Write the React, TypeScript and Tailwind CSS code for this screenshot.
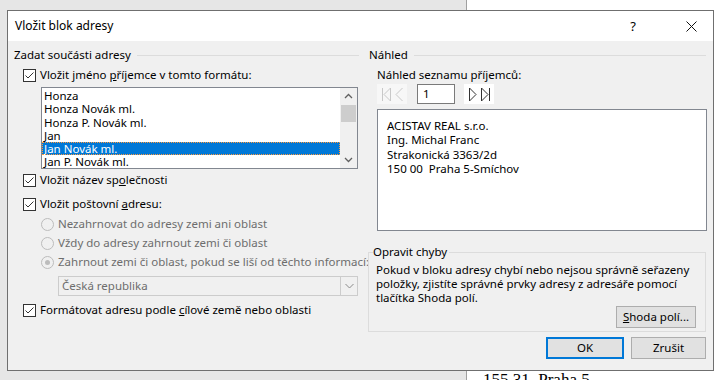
import type { ReactNode } from "react";

const ui = "font-['Noto_Sans',sans-serif] text-[11.5px] leading-[14px]";

function CheckBox({ children }: { children: ReactNode }) {
    return (
        <div className="flex items-center h-[14px]">
            <span className="w-[13px] h-[13px] border border-[#333333] bg-white flex items-center justify-center shrink-0">
                <svg width="11" height="11" viewBox="0 0 11 11">
                    <polyline points="1.5,5.5 4,8 9.5,2.5" fill="none" stroke="#333333" strokeWidth="1" />
                </svg>
            </span>
            <span className="ml-[4px] text-black whitespace-nowrap">{children}</span>
        </div>
    );
}

function Radio({ children, on }: { children: ReactNode; on?: boolean }) {
    return (
        <div className="flex items-center h-[14px]">
            <span className="w-[13px] h-[13px] rounded-full border border-[#bcbcbc] bg-[#f0f0f0] flex items-center justify-center shrink-0">
                {on && <span className="w-[5px] h-[5px] rounded-full bg-[#bcbcbc]" />}
            </span>
            <span className="ml-[4px] text-[#6d6d6d] whitespace-nowrap">{children}</span>
        </div>
    );
}

function GroupLabel({ children }: { children: ReactNode }) {
    return (
        <div className="flex items-center h-[14px]">
            <span className="whitespace-nowrap text-black">{children}</span>
            <span className="flex-1 ml-[6px] h-px bg-[#dcdcdc]" />
        </div>
    );
}

const names = ["Honza", "Honza Novák ml.", "Honza P. Novák ml.", "Jan", "Jan Novák ml.", "Jan P. Novák ml."];

export default function App() {
    return (
        <div className={`relative w-[724px] h-[380px] overflow-hidden flex ${ui}`}>
            {/* document behind */}
            <div className="w-[467px] bg-[#e6e6e6] border-r border-[#a0a0a0]" />
            <div className="flex-1 bg-white flex flex-col justify-end">
                <div className="ml-[16px] mb-[-10px] font-['Liberation_Serif',serif] text-[17px] leading-[20px] text-black whitespace-nowrap">
                    155 31&nbsp; Praha 5
                </div>
            </div>

            {/* dialog */}
            <div className="absolute left-[7px] top-[10px] w-[707px] h-[361px] border border-[#6f6f6f] bg-[#f0f0f0] flex flex-col">
                <div className="h-[30px] bg-white flex items-center pl-[7px] shrink-0">
                    <span className="flex-1 text-black text-[12px]">Vložit blok adresy</span>
                    <span className="w-[14px] text-center text-[13px] text-black mr-[46px]">?</span>
                    <svg width="11" height="11" viewBox="0 0 11 11" className="mr-[16px]">
                        <path d="M0.5 0.5 L10.5 10.5 M10.5 0.5 L0.5 10.5" stroke="#111111" strokeWidth="1" />
                    </svg>
                </div>

                <div className="flex pl-[6px] pt-[7px]">
                    {/* left column */}
                    <div className="w-[345px] flex flex-col">
                        <GroupLabel>Zadat součásti adresy</GroupLabel>
                        <div className="mt-[6px] ml-[9px]">
                            <CheckBox>
                                Vložit jméno <u>p</u>říjemce v tomto formátu:
                            </CheckBox>
                        </div>
                        <div className="mt-[5px] ml-[27px] w-[317px] h-[82px] border border-[#828790] bg-white flex">
                            <div className="flex-1 flex flex-col pt-px">
                                {names.map((n) => (
                                    <div
                                        key={n}
                                        className={`leading-[13.3px] pl-[2px] whitespace-nowrap ${
                                            n === "Jan Novák ml."
                                                ? "bg-[#0078d7] text-white outline-1 outline-dotted outline-[#ff9a3c] -outline-offset-1"
                                                : "text-black"
                                        }`}
                                    >
                                        {n}
                                    </div>
                                ))}
                            </div>
                            <div className="w-[17px] bg-[#f0f0f0] flex flex-col items-center">
                                <svg width="17" height="17" viewBox="0 0 17 17">
                                    <polyline points="5,10 8.5,6.5 12,10" fill="none" stroke="#606060" strokeWidth="1.3" />
                                </svg>
                                <div className="w-[15px] h-[17px] bg-[#cdcdcd]" />
                                <div className="flex-1" />
                                <svg width="17" height="17" viewBox="0 0 17 17">
                                    <polyline points="5,7 8.5,10.5 12,7" fill="none" stroke="#606060" strokeWidth="1.3" />
                                </svg>
                            </div>
                        </div>
                        <div className="mt-[4px] ml-[9px]">
                            <CheckBox>
                                Vložit název sp<u>o</u>lečnosti
                            </CheckBox>
                        </div>
                        <div className="mt-[10px] ml-[9px]">
                            <CheckBox>
                                Vložit poštovní <u>a</u>dresu:
                            </CheckBox>
                        </div>
                        <div className="mt-[6px] ml-[27px] flex flex-col gap-[5px]">
                            <Radio>Nezahrnovat do adresy zemi ani oblast</Radio>
                            <Radio>Vždy do adresy zahrnout zemi či oblast</Radio>
                            <Radio on>Zahrnout zemi či oblast, pokud se liší od těchto informací:</Radio>
                        </div>
                        <div className="mt-[7px] ml-[44px] w-[300px] h-[20px] border border-[#cccccc] bg-[#f0f0f0] flex">
                            <span className="flex-1 pl-[3px] leading-[18px] text-[#6d6d6d]">Česká republika</span>
                            <span className="w-[17px] border-l border-[#cccccc] flex items-center justify-center">
                                <svg width="9" height="6" viewBox="0 0 9 6">
                                    <polyline points="0.5,1 4.5,5 8.5,1" fill="none" stroke="#8a8a8a" strokeWidth="1" />
                                </svg>
                            </span>
                        </div>
                        <div className="mt-[7px] ml-[9px]">
                            <CheckBox>
                                Formátovat adresu podle <u>c</u>ílové země nebo oblasti
                            </CheckBox>
                        </div>
                    </div>

                    {/* right column */}
                    <div className="ml-[9px] w-[338px] flex flex-col">
                        <div className="pl-px">
                            <GroupLabel>Náhled</GroupLabel>
                        </div>
                        <div className="mt-[6px] pl-[9px] h-[14px] text-black whitespace-nowrap">Náhled seznamu příjemců:</div>
                        <div className="mt-[2px] pl-[9px] flex items-center h-[20px]">
                            <div className="w-[30px] h-[20px] bg-[#f7f7f7] flex items-center justify-center gap-[3px]">
                                <svg width="9" height="15" viewBox="0 0 9 15">
                                    <path d="M0.5 1 V14 M8.5 1 L2 7.5 L8.5 14 Z" fill="none" stroke="#c8c8c8" strokeWidth="1" />
                                </svg>
                                <svg width="9" height="15" viewBox="0 0 9 15">
                                    <path d="M8.5 1 L2 7.5 L8.5 14" fill="none" stroke="#c8c8c8" strokeWidth="1" />
                                </svg>
                            </div>
                            <div className="ml-[10px] w-[38px] h-[20px] border border-[#7a7a7a] bg-white pl-[5px] leading-[18px] text-black">1</div>
                            <div className="ml-[9px] w-[30px] h-[20px] bg-white flex items-center justify-center gap-[3px]">
                                <svg width="9" height="15" viewBox="0 0 9 15">
                                    <path d="M0.5 1 L7 7.5 L0.5 14 Z" fill="none" stroke="#333333" strokeWidth="1" />
                                </svg>
                                <svg width="9" height="15" viewBox="0 0 9 15">
                                    <path d="M0.5 1 L7 7.5 L0.5 14 Z M8.5 1 V14" fill="none" stroke="#333333" strokeWidth="1" />
                                </svg>
                            </div>
                        </div>
                        <div className="mt-[5px] ml-[9px] w-[330px] h-[122px] border border-[#828790] bg-white pl-[9px] pt-[9px] leading-[14.3px] text-black">
                            <div>ACISTAV REAL s.r.o.</div>
                            <div>Ing. Michal Franc</div>
                            <div>Strakonická 3363/2d</div>
                            <div>150 00&nbsp; Praha 5-Smíchov</div>
                        </div>
                        <div className="mt-[21px] w-[338px] h-[80px] border border-[#dcdcdc] relative pl-[7px] pt-[10px]">
                            <span className="absolute left-[4px] top-[-8px] bg-[#f0f0f0] pr-[2px] text-black">Opravit chyby</span>
                            <div className="text-black leading-[14px] whitespace-nowrap">
                                Pokud v bloku adresy chybí nebo nejsou správně seřazeny
                                <br />
                                položky, zjistíte správné prvky adresy z adresáře pomocí
                                <br />
                                tlačítka Shoda polí.
                            </div>
                            <div className="flex justify-end mt-px mr-[9px]">
                                <button className="w-[80px] h-[22px] border border-[#adadad] bg-[#e1e1e1] text-black">
                                    <u>S</u>hoda polí...
                                </button>
                            </div>
                        </div>
                        <div className="mt-[5px] flex justify-end gap-[7px]">
                            <button className="w-[78px] h-[22px] border-2 border-[#0078d7] bg-[#e1e1e1] text-black">OK</button>
                            <button className="w-[75px] h-[22px] border border-[#adadad] bg-[#e1e1e1] text-black">Zrušit</button>
                        </div>
                    </div>
                </div>
            </div>
        </div>
    );
}
